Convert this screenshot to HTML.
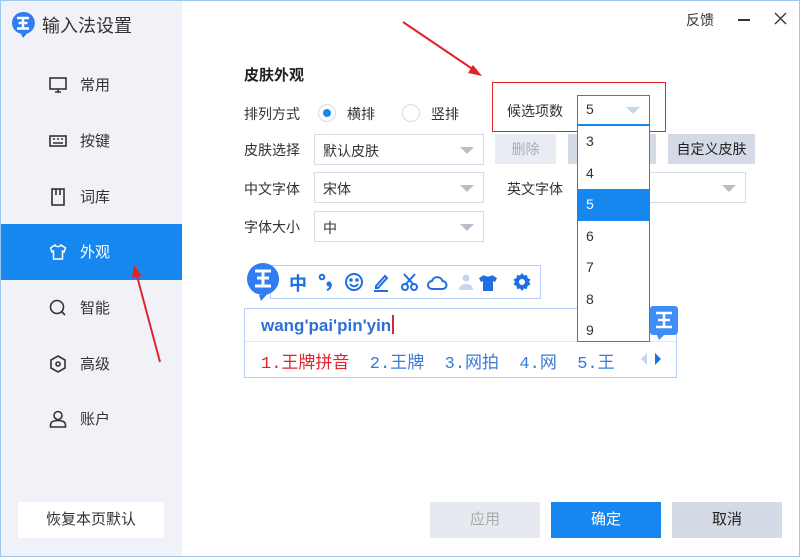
<!DOCTYPE html>
<html><head><meta charset="utf-8"><style>
*{margin:0;padding:0;box-sizing:border-box}
body{width:800px;height:557px;overflow:hidden;background:#fff;font-family:"Liberation Sans","Noto Sans CJK SC",sans-serif;color:#333;position:relative}
.a{position:absolute}
.win{left:0;top:0;width:800px;height:557px;border:1px solid #9cc8ef}
.side{left:1px;top:1px;width:181px;height:555px;background:#f0f2f8}
.nav{left:1px;width:181px;height:56px;font-size:15px;color:#333}
.nav span{position:absolute;left:79px;top:17px}
.nav svg{position:absolute;left:48px;top:19px}
.act{background:#1787f0;color:#fff}
.lbl{font-size:14px;color:#333}
.sel{border:1px solid #d7dbe6;background:#fff;font-size:14px}
.sel span{position:absolute;left:8px;top:6px}
.tri{position:absolute;right:9px;top:12px;width:0;height:0;border-left:7px solid transparent;border-right:7px solid transparent;border-top:7px solid #b8bdc8}
.btn{font-size:14px;text-align:center}
.dd div{height:31.5px;font-size:14px;padding-left:8px;line-height:31px;color:#333}
</style></head><body>
<div class="a side"></div>
<div class="a win"></div>
<svg class="a" style="left:11px;top:11px" width="26" height="28" viewBox="0 0 26 28"><path d="M12 1a11 11 0 1 0 0 22h-2l2 4 4-4.5A11 11 0 0 0 12 1z" fill="#2f7df0"/><path d="M6 7h12M7.5 12h9M6 17.5h12M12 7v10.5" stroke="#fff" stroke-width="2.4" fill="none"/></svg>
<div class="a" style="left:42px;top:12px;font-size:18px;color:#333">输入法设置</div>
<div class="a nav" style="top:57px"><svg width="18" height="18" viewBox="0 0 18 18" fill="none" stroke="#333" stroke-width="1.6"><rect x="1" y="2" width="16" height="11"/><path d="M6 16h6M9 13v3"/></svg><span>常用</span></div>
<div class="a nav" style="top:113px"><svg width="18" height="18" viewBox="0 0 18 18" fill="none" stroke="#333" stroke-width="1.6"><rect x="1" y="4" width="16" height="10"/><path d="M4 7h2M8 7h2M12 7h2M4 11h10"/></svg><span>按键</span></div>
<div class="a nav" style="top:169px"><svg width="18" height="18" viewBox="0 0 18 18" fill="none" stroke="#333" stroke-width="1.6"><rect x="3" y="1" width="12" height="16"/><path d="M7 1v6M11 1v6"/></svg><span>词库</span></div>
<div class="a nav act" style="top:224px;height:56px"><svg width="18" height="18" viewBox="0 0 18 18" fill="none" stroke="#fff" stroke-width="1.5"><path d="M6 2L1.5 5l1.5 4 1.5-1V16h9V8l1.5 1 1.5-4L12 2c-.5 2-5.5 2-6 0z"/></svg><span>外观</span></div>
<div class="a nav" style="top:280px"><svg width="18" height="18" viewBox="0 0 18 18" fill="none" stroke="#333" stroke-width="1.6"><circle cx="8" cy="8" r="6.5"/><path d="M12.5 12.5L16 16"/></svg><span>智能</span></div>
<div class="a nav" style="top:336px"><svg width="18" height="18" viewBox="0 0 18 18" fill="none" stroke="#333" stroke-width="1.6"><path d="M9 1l7 4v8l-7 4-7-4V5z"/><circle cx="9" cy="9" r="2"/></svg><span>高级</span></div>
<div class="a nav" style="top:391px"><svg width="18" height="18" viewBox="0 0 18 18" fill="none" stroke="#333" stroke-width="1.6"><circle cx="9" cy="5.5" r="4"/><path d="M1.5 17v-2c0-3 3-4.5 7.5-4.5s7.5 1.5 7.5 4.5v2z"/></svg><span>账户</span></div>
<div class="a btn" style="left:18px;top:502px;width:146px;height:36px;background:#fff;line-height:36px;font-size:15px">恢复本页默认</div>
<div class="a" style="left:686px;top:10px;font-size:14px">反馈</div>
<div class="a" style="left:738px;top:19px;width:12px;height:1.5px;background:#333"></div>
<svg class="a" style="left:774px;top:12px" width="13" height="13"><path d="M1 1l11 11M12 1L1 12" stroke="#333" stroke-width="1.3"/></svg>
<div class="a" style="left:244px;top:64px;font-size:15px;font-weight:bold;color:#222">皮肤外观</div>
<div class="a lbl" style="left:244px;top:104px">排列方式</div>
<div class="a" style="left:318px;top:104px;width:18px;height:18px;border:1px solid #d7dbe6;border-radius:50%;background:#fff"><div class="a" style="left:4px;top:4px;width:8px;height:8px;border-radius:50%;background:#1787f0"></div></div>
<div class="a lbl" style="left:347px;top:104px">横排</div>
<div class="a" style="left:402px;top:104px;width:18px;height:18px;border:1px solid #d7dbe6;border-radius:50%"></div>
<div class="a lbl" style="left:431px;top:104px">竖排</div>
<div class="a lbl" style="left:244px;top:140px">皮肤选择</div>
<div class="a sel" style="left:314px;top:134px;width:170px;height:31px"><span>默认皮肤</span><div class="tri"></div></div>
<div class="a lbl" style="left:244px;top:179px">中文字体</div>
<div class="a sel" style="left:314px;top:172px;width:170px;height:31px"><span>宋体</span><div class="tri"></div></div>
<div class="a lbl" style="left:244px;top:217px">字体大小</div>
<div class="a sel" style="left:314px;top:211px;width:170px;height:31px"><span>中</span><div class="tri"></div></div>
<div class="a btn" style="left:495px;top:134px;width:61px;height:30px;background:#e9ecf2;color:#aab;line-height:30px">删除</div>
<div class="a" style="left:568px;top:134px;width:88px;height:30px;background:#d5dbe6"></div>
<div class="a btn" style="left:668px;top:134px;width:87px;height:30px;background:#d5dbe6;color:#222;line-height:30px">自定义皮肤</div>
<div class="a lbl" style="left:507px;top:179px">英文字体</div>
<div class="a sel" style="left:578px;top:172px;width:168px;height:31px"><div class="tri"></div></div>
<div class="a" style="left:492px;top:82px;width:174px;height:50px;border:1.5px solid #e0242c"></div>
<div class="a lbl" style="left:507px;top:101px">候选项数</div>
<div class="a sel" style="left:577px;top:95px;width:73px;height:30px;border-color:#1787f0"><span style="top:5px">5</span><div class="tri" style="top:11px;border-top-color:#c8d6ea"></div></div>
<!-- toolbar -->
<div class="a" style="left:270px;top:265px;width:271px;height:34px;border:1px solid #b4cff5;background:#fff"></div>
<svg class="a" style="left:246px;top:262px" width="34" height="40" viewBox="0 0 34 40"><path d="M17 1a16 16 0 1 0 0 32h-4l2 6 6-6.5A16 16 0 0 0 17 1z" fill="#2f7df0"/><path d="M9 9h16M11 16h12M9 24h16M17 9v15" stroke="#fff" stroke-width="3" fill="none"/></svg>
<div class="a" style="left:289px;top:270px;font-size:18px;font-weight:bold;color:#1f6fe0">中</div>
<svg class="a" style="left:318px;top:272px" width="190" height="22" viewBox="0 0 190 22" fill="none" stroke="#1f6fe0" stroke-width="2">
<circle cx="4" cy="5" r="2.3"/><circle cx="11" cy="12" r="2.5" fill="#1f6fe0" stroke="none"/><path d="M13 12c0 3-1 5-4 6" stroke-width="2"/>
<circle cx="36" cy="10" r="8"/><circle cx="33" cy="8" r=".8" fill="#1f6fe0"/><circle cx="39" cy="8" r=".8" fill="#1f6fe0"/><path d="M32 12c2 3 6 3 8 0"/>
<path d="M58 14l9-10 2 2-9 10h-2zM56 19h14"/>
<circle cx="87" cy="15" r="3"/><circle cx="96" cy="15" r="3"/><path d="M88 12l9-10M95 12l-9-10"/>
<path d="M114 17a4 4 0 0 1 0-8 5.5 5.5 0 0 1 10.5 0 4 4 0 0 1 0 8z"/>
<circle cx="148" cy="6" r="3.5" fill="#c4d7f2" stroke="none"/><path d="M141 18c0-4 3-6 7-6s7 2 7 6z" fill="#c4d7f2" stroke="none"/>
<path d="M166 3l-5 3 2 4 2-1v10h10V9l2 1 2-4-5-3c-1 2-7 2-8 0z" fill="#1f6fe0" stroke="none"/>
</svg>
<svg class="a" style="left:512px;top:272px" width="20" height="20" viewBox="0 0 20 20"><path d="M10 1l2 2.5 3-.5.5 3 3 1.5-1.5 2.5 1.5 2.5-3 1.5-.5 3-3-.5-2 2.5-2-2.5-3 .5-.5-3-3-1.5L3 10 1.5 7.5l3-1.5.5-3 3 .5z" fill="#1f6fe0"/><circle cx="10" cy="10" r="3" fill="#fff"/></svg>
<!-- candidate box -->
<div class="a" style="left:244px;top:308px;width:433px;height:70px;border:1px solid #b4cff5;background:#fff"></div>
<div class="a" style="left:245px;top:341px;width:431px;height:1px;background:#dde8f8"></div>
<div class="a" style="left:261px;top:315px;font-size:17px;font-weight:bold;color:#2f6fd6">wang'pai'pin'yin<span style="display:inline-block;width:1.5px;height:19px;background:#e0242c;vertical-align:-3px;margin-left:1px"></span></div>
<svg class="a" style="left:649px;top:305px" width="30" height="36" viewBox="0 0 30 36"><path d="M4 1h22a3 3 0 0 1 3 3v22a4 4 0 0 1-4 4H15l-5 5-2-5H4a3 3 0 0 1-3-3V4a3 3 0 0 1 3-3z" fill="#3d8ef5"/><path d="M7 8h16M9 15h12M7 22h16M15 8v14" stroke="#fff" stroke-width="2.6"/></svg>
<div class="a" style="left:261px;top:348px;font-size:17px;font-family:'Liberation Mono','Noto Sans CJK SC',monospace;white-space:pre;color:#3a7ad8"><span style="color:#e0242c">1.王牌拼音</span>  2.王牌  3.网拍  4.网  5.王</div>
<div class="a" style="left:641px;top:353px;width:0;height:0;border-top:6px solid transparent;border-bottom:6px solid transparent;border-right:6px solid #c4d7f2"></div>
<div class="a" style="left:655px;top:353px;width:0;height:0;border-top:6px solid transparent;border-bottom:6px solid transparent;border-left:6px solid #1f6fe0"></div>
<!-- dropdown on top -->
<div class="a dd" style="left:577px;top:125px;width:73px;height:217px;border:1px solid #1787f0;background:#fff;z-index:5">
<div>3</div><div>4</div><div style="background:#1787f0;color:#fff">5</div><div>6</div><div>7</div><div>8</div><div>9</div></div>
<div class="a btn" style="left:430px;top:502px;width:110px;height:36px;background:#e6e9f0;color:#aaa;line-height:36px;font-size:15px">应用</div>
<div class="a btn" style="left:551px;top:502px;width:110px;height:36px;background:#1787f0;color:#fff;line-height:36px;font-size:15px">确定</div>
<div class="a btn" style="left:672px;top:502px;width:110px;height:36px;background:#d5dbe6;color:#222;line-height:36px;font-size:15px">取消</div>
<svg class="a" style="left:0;top:0;z-index:6" width="800" height="557"><g stroke="#e0242c" stroke-width="2" fill="#e0242c"><path d="M403 22L474 70"/><path d="M482 76l-14-3 5-8z" stroke="none"/><path d="M160 362L137 276"/><path d="M134 265l8 11-10 2z" stroke="none"/></g></svg>
</body></html>
